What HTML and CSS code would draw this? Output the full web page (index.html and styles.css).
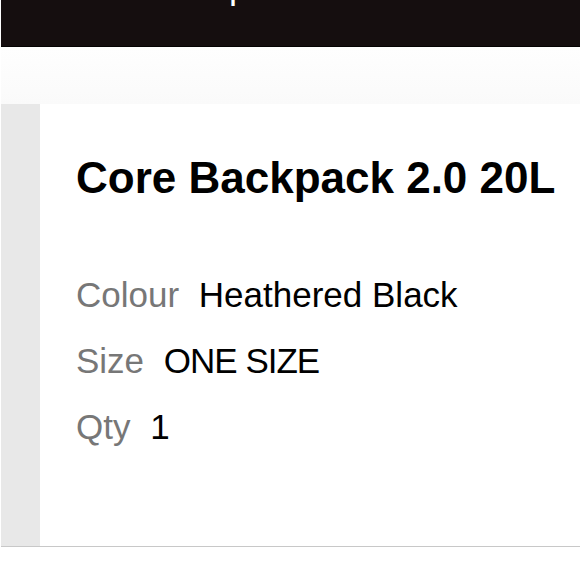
FILE: index.html
```html
<!DOCTYPE html>
<html lang="en">
<head>
<meta charset="utf-8">
<title>Order</title>
<link rel="stylesheet" href="styles.css">
</head>
<body>
<div class="page">
  <header class="topbar">
    <div class="topbar-title">Order complete</div>
  </header>
  <div class="gap-band"></div>
  <section class="item">
    <div class="item-strip"></div>
    <div class="item-body">
      <h1 class="item-name">Core Backpack 2.0 20L</h1>
      <div class="item-row"><span class="item-label">Colour</span><span class="item-value">Heathered Black</span></div>
      <div class="item-row"><span class="item-label">Size</span><span class="item-value item-value-narrow">ONE SIZE</span></div>
      <div class="item-row"><span class="item-label">Qty</span><span class="item-value">1</span></div>
    </div>
  </section>
</div>
</body>
</html>
```

FILE: styles.css
```css
html, body {
  margin: 0;
  padding: 0;
  background: #ffffff;
}

body {
  font-family: "Liberation Sans", Arial, sans-serif;
  color: #000;
}

.page {
  padding-left: 1px;
}

.topbar {
  height: 46px;
  background: #150e0f;
  border-bottom: 1px solid #050303;
  overflow: hidden;
}

.topbar-title {
  margin-top: -32px;
  padding-left: 58px;
  font-size: 36px;
  line-height: 36px;
  color: #fff;
}

.gap-band {
  height: 57px;
  background: linear-gradient(#fefefe, #fafafa);
}

.item {
  display: flex;
  border-bottom: 1px solid #c8c8c8;
  background: #fff;
}

.item-strip {
  width: 39px;
  background: #e8e8e8;
}

.item-body {
  padding: 52px 0 86px 36px;
}

.item-name {
  margin: 0 0 62px;
  font-size: 44px;
  line-height: 44px;
  font-weight: 700;
  white-space: nowrap;
}

.item-row {
  font-size: 35px;
  line-height: 66px;
  white-space: nowrap;
}

.item-label {
  color: #777777;
  margin-right: 10px;
}

.item-label::after {
  content: " ";
}

.item-value-narrow {
  letter-spacing: -1px;
}
```
